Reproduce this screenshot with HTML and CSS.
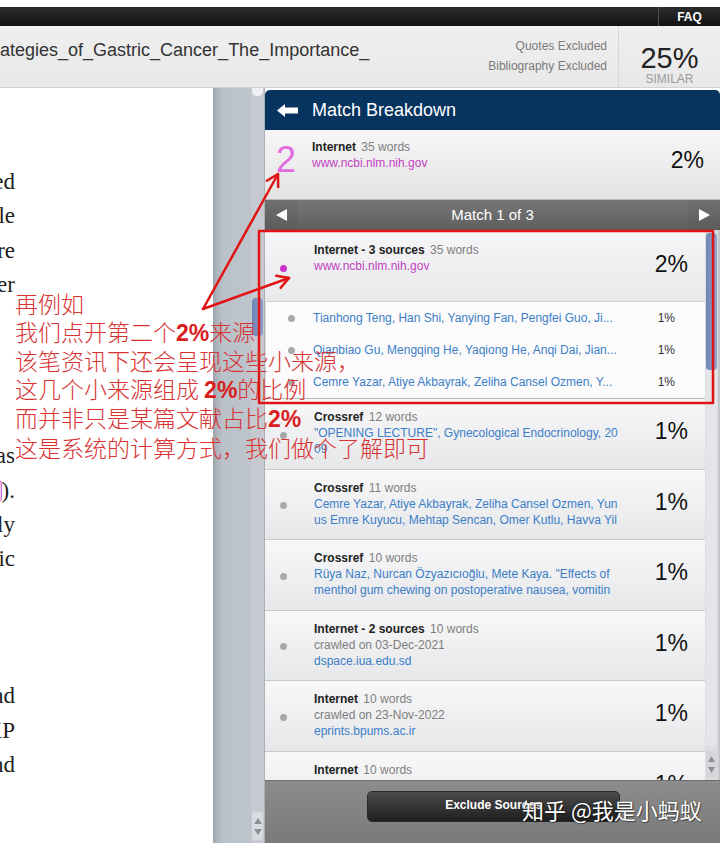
FILE: index.html
```html
<!DOCTYPE html>
<html>
<head>
<meta charset="utf-8">
<link rel="stylesheet" href="styles.css">
</head>
<body>
<div class="page">
  <div class="topstrip"></div>
  <div class="blackbar"><div class="faq">FAQ</div></div>
  <div class="titlebar">
    <div class="doc-title">ategies_of_Gastric_Cancer_The_Importance_</div>
    <div class="excl"><div>Quotes Excluded</div><div>Bibliography Excluded</div></div>
    <div class="score"><div class="score-num">25%</div><div class="score-lbl">SIMILAR</div></div>
  </div>
  <div class="main">
    <div class="doc">
      <div class="ln"><span>treated</span></div>
      <div class="ln"><span>while</span></div>
      <div class="ln"><span>were</span></div>
      <div class="ln"><span>other</span></div>
      <div class="ln"></div>
      <div class="ln"></div>
      <div class="ln"></div>
      <div class="ln"></div>
      <div class="ln"><span>was</span></div>
      <div class="ln"><span>al.<i class="cursor"></i>).</span></div>
      <div class="ln"><span>only</span></div>
      <div class="ln"><span>gastric</span></div>
      <div class="ln"></div>
      <div class="ln"></div>
      <div class="ln"></div>
      <div class="ln"><span>and</span></div>
      <div class="ln"><span>XXP</span></div>
      <div class="ln"><span>and</span></div>
    </div>
    <div class="gutter">
      <div class="gutter-fill"></div>
      <div class="vscroll">
        <div class="vs-cap"></div>
        <div class="vs-space"></div>
        <div class="vs-thumb"></div>
        <div class="vs-rest"></div>
        <div class="vs-arrows">
          <svg width="8" height="6" viewBox="0 0 8 6"><polygon points="4,0 8,6 0,6" fill="#8a8f96"/></svg>
          <svg width="8" height="6" viewBox="0 0 8 6"><polygon points="0,0 8,0 4,6" fill="#8a8f96"/></svg>
        </div>
      </div>
    </div>
    <div class="panel">
      <div class="ph">
        <svg class="back" width="21" height="13" viewBox="0 0 21 13"><polygon points="0,6.5 8,0 8,3.5 21,3.5 21,9.5 8,9.5 8,13" fill="#fff"/></svg>
        <span>Match Breakdown</span>
      </div>
      <div class="row-top">
        <div class="big-num">2</div>
        <div class="src-text">
          <div><b>Internet</b> <span class="words">35 words</span></div>
          <div class="mag">www.ncbi.nlm.nih.gov</div>
        </div>
        <div class="pct">2%</div>
      </div>
      <div class="matchbar">
        <div class="mb-btn"><svg width="11" height="12" viewBox="0 0 11 12"><polygon points="0,6 11,0 11,12" fill="#fff"/></svg></div>
        <div class="mb-title">Match 1 of 3</div>
        <div class="mb-btn"><svg width="11" height="12" viewBox="0 0 11 12"><polygon points="0,0 11,6 0,12" fill="#fff"/></svg></div>
      </div>
      <div class="scrollwrap">
        <div class="list">
          <div class="exp">
            <div class="dot dot-mag"></div>
            <div class="src-text">
              <div><b>Internet - 3 sources</b> <span class="words">35 words</span></div>
              <div class="mag">www.ncbi.nlm.nih.gov</div>
            </div>
            <div class="pct">2%</div>
          </div>
          <div class="sub">
            <div class="sub-row"><div class="dot sdot"></div><div class="blue">Tianhong Teng, Han Shi, Yanying Fan, Pengfei Guo, Ji...</div><div class="spct">1%</div></div>
            <div class="sub-row"><div class="dot sdot"></div><div class="blue">Qianbiao Gu, Mengqing He, Yaqiong He, Anqi Dai, Jian...</div><div class="spct">1%</div></div>
            <div class="sub-row"><div class="dot sdot"></div><div class="blue">Cemre Yazar, Atiye Akbayrak, Zeliha Cansel Ozmen, Y...</div><div class="spct">1%</div></div>
          </div>
          <div class="src">
            <div class="dot"></div>
            <div class="src-text">
              <div><b>Crossref</b> <span class="words">12 words</span></div>
              <div class="blue">"OPENING LECTURE", Gynecological Endocrinology, 20</div>
              <div class="blue">09</div>
            </div>
            <div class="pct">1%</div>
          </div>
          <div class="src">
            <div class="dot"></div>
            <div class="src-text">
              <div><b>Crossref</b> <span class="words">11 words</span></div>
              <div class="blue">Cemre Yazar, Atiye Akbayrak, Zeliha Cansel Ozmen, Yun</div>
              <div class="blue">us Emre Kuyucu, Mehtap Sencan, Omer Kutlu, Havva Yil</div>
            </div>
            <div class="pct">1%</div>
          </div>
          <div class="src">
            <div class="dot"></div>
            <div class="src-text">
              <div><b>Crossref</b> <span class="words">10 words</span></div>
              <div class="blue">Rüya Naz, Nurcan Özyazıcıoğlu, Mete Kaya. "Effects of</div>
              <div class="blue">menthol gum chewing on postoperative nausea, vomitin</div>
            </div>
            <div class="pct">1%</div>
          </div>
          <div class="src">
            <div class="dot"></div>
            <div class="src-text">
              <div><b>Internet - 2 sources</b> <span class="words">10 words</span></div>
              <div class="gray">crawled on 03-Dec-2021</div>
              <div class="blue">dspace.iua.edu.sd</div>
            </div>
            <div class="pct">1%</div>
          </div>
          <div class="src">
            <div class="dot"></div>
            <div class="src-text">
              <div><b>Internet</b> <span class="words">10 words</span></div>
              <div class="gray">crawled on 23-Nov-2022</div>
              <div class="blue">eprints.bpums.ac.ir</div>
            </div>
            <div class="pct">1%</div>
          </div>
          <div class="src">
            <div class="dot"></div>
            <div class="src-text">
              <div><b>Internet</b> <span class="words">10 words</span></div>
              <div class="gray">crawled on 10-Jan-2023</div>
              <div class="blue">www.ncbi.nlm.nih.gov</div>
            </div>
            <div class="pct">1%</div>
          </div>
        </div>
        <div class="psb">
          <div class="psb-thumb"></div>
          <div class="psb-track"></div>
          <div class="psb-arrows">
            <svg width="7" height="6" viewBox="0 0 7 6"><polygon points="3.5,0 7,6 0,6" fill="#8a8f96"/></svg>
            <svg width="7" height="6" viewBox="0 0 7 6"><polygon points="0,0 7,0 3.5,6" fill="#8a8f96"/></svg>
          </div>
        </div>
      </div>
      <div class="pbottom"><div class="btn">Exclude Sources</div></div>
    </div>
  </div>

  <svg class="annot" width="720" height="843" viewBox="0 0 720 843">
    <g stroke="#e01414" stroke-width="2.5" fill="none" stroke-linecap="round" stroke-linejoin="round">
      <rect x="259" y="231" width="454" height="172"/>
      <line x1="203" y1="309" x2="278" y2="174"/>
      <polyline points="266.8,180.7 278,174 278.2,187"/>
      <line x1="203" y1="309" x2="289" y2="278"/>
      <polyline points="276.2,275.7 289,278 280.6,287.9"/>
    </g>
  </svg>
  <div class="note">
    <div>再例如</div>
    <div>我们点开第二个<b>2%</b>来源</div>
    <div>该笔资讯下还会呈现这些小来源，</div>
    <div>这几个小来源组成 <b>2%</b>的比例</div>
    <div>而并非只是某篇文献占比<b>2%</b></div>
    <div>这是系统的计算方式，我们做个了解即可</div>
  </div>
  <div class="watermark">知乎 @我是小蚂蚁</div>
</div>
</body>
</html>
```

FILE: styles.css
```css
* { box-sizing: border-box; }
html, body { margin: 0; padding: 0; }
body {
  width: 720px;
  height: 843px;
  overflow: hidden;
  font-family: "Liberation Sans", Arial, sans-serif;
  background: #fff;
}
.page {
  position: relative;
  width: 720px;
  height: 843px;
  overflow: hidden;
  display: flex;
  flex-direction: column;
}
.topstrip { height: 7px; background: #fff; flex: none; }
.blackbar {
  height: 19px;
  flex: none;
  background: linear-gradient(#2c2c2c, #121212);
  display: flex;
  justify-content: flex-end;
}
.faq {
  width: 62px;
  border-left: 1px solid #4a4a4a;
  color: #fff;
  font-weight: bold;
  font-size: 12px;
  display: flex;
  align-items: center;
  justify-content: center;
}
.titlebar {
  height: 62px;
  flex: none;
  background: linear-gradient(#efefef, #e8e8e8);
  border-bottom: 1px solid #d2d2d2;
  display: flex;
}
.doc-title {
  flex: 1;
  font-size: 18px;
  line-height: 20px;
  color: #333;
  padding-top: 14px;
  white-space: nowrap;
  overflow: hidden;
}
.excl {
  text-align: right;
  font-size: 12px;
  line-height: 20px;
  color: #7a7a7a;
  padding-top: 10px;
  padding-right: 11px;
}
.score {
  width: 102px;
  border-left: 1px solid #d6d6d6;
  text-align: center;
  padding-top: 17px;
}
.score-num { font-size: 29px; line-height: 30px; color: #222; }
.score-lbl { font-size: 12px; line-height: 13px; color: #999; }

.main { flex: 1; display: flex; min-height: 0; }
.doc {
  width: 213px;
  flex: none;
  background: #fff;
  overflow: hidden;
  padding-top: 77px;
  font-family: "Liberation Serif", "Times New Roman", serif;
  font-size: 23px;
  line-height: 34.3px;
  color: #1e1e1e;
}
.ln {
  width: 15px;
  height: 34.3px;
  display: flex;
  justify-content: flex-end;
  white-space: nowrap;
}
.ln span { flex: none; }
.cursor {
  display: inline-block;
  width: 4px;
  height: 22px;
  vertical-align: -4px;
  border: 1px solid #d36fd6;
  border-left: none;
  border-radius: 0 4px 4px 0;
  background: #f2c6f0;
}
.gutter { width: 52px; flex: none; display: flex; }
.gutter-fill {
  width: 38px;
  background: linear-gradient(90deg, #9ca2aa 0, #aeb4bc 4px, #bbc1c9 10px, #bec4cc 100%);
}
.vscroll {
  width: 14px;
  display: flex;
  flex-direction: column;
  background: #c6cad0;
  border-right: 1px solid #aab0b7;
  padding: 0 1px;
}
.vs-cap { height: 8px; background: #eef0f3; border-radius: 0 0 5px 5px; }
.vs-space { height: 202px; }
.vs-thumb { height: 38px; background: linear-gradient(90deg, #6f86b4, #8aa0cb); border-radius: 4px; }
.vs-rest { flex: 1; }
.vs-arrows {
  height: 28px;
  margin-bottom: 3px;
  background: #d8dbe0;
  border-radius: 3px;
  display: flex;
  flex-direction: column;
  align-items: center;
  justify-content: space-around;
  padding: 3px 0;
}

.panel {
  width: 455px;
  flex: none;
  margin-top: 2px;
  display: flex;
  flex-direction: column;
  border-radius: 5px 5px 0 0;
  overflow: hidden;
  background: #d9d9d9;
}
.ph {
  height: 40px;
  flex: none;
  background: #06345f;
  display: flex;
  align-items: center;
  color: #fff;
  font-size: 18px;
}
.back { margin-left: 12px; margin-right: 14px; }
.row-top {
  height: 70px;
  flex: none;
  background: linear-gradient(#f7f7f7, #e3e3e3);
  border-bottom: 1px solid #b9b9b9;
  display: grid;
  grid-template-columns: 47px 1fr auto;
}
.big-num {
  font-size: 36px;
  line-height: 36px;
  color: #e36ae0;
  padding-left: 11px;
  padding-top: 12px;
}
.src-text {
  font-size: 12px;
  line-height: 16px;
  color: #222;
  white-space: nowrap;
  overflow: hidden;
}
.row-top .src-text { padding-top: 9px; }
.src-text b { font-weight: bold; color: #222; }
.words { color: #7e7e7e; margin-left: 2px; }
.mag { color: #c23fc4; }
.blue { color: #3b7ec8; }
.gray { color: #7e7e7e; }
.pct {
  font-size: 23px;
  line-height: 24px;
  color: #111;
  padding-right: 16px;
  padding-top: 18px;
}
.matchbar {
  height: 30px;
  flex: none;
  background: linear-gradient(#767676, #5f5f5f);
  display: flex;
  align-items: center;
  color: #fff;
  font-size: 15px;
}
.mb-btn {
  width: 32px;
  height: 30px;
  display: flex;
  align-items: center;
  justify-content: center;
  background: linear-gradient(#707070, #5b5b5b);
}
.mb-title { flex: 1; text-align: center; padding-bottom: 2px; }
.scrollwrap { height: 550px; flex: none; display: flex; }
.list {
  width: 440px;
  flex: none;
  overflow: hidden;
  background: #e8e9eb;
}
.exp {
  height: 72px;
  background: linear-gradient(#f6f6f8, #e8e9eb);
  border-bottom: 1px solid #cfcfcf;
  display: grid;
  grid-template-columns: 49px 1fr auto;
}
.exp .src-text { padding-top: 12px; }
.exp .pct { padding-right: 17px; padding-top: 22px; }
.dot {
  width: 7px;
  height: 7px;
  border-radius: 50%;
  background: #a9a9a9;
  margin-left: 15px;
  align-self: center;
  margin-top: 3px;
}
.dot-mag { background: #cc33cc; margin-top: 6px; }
.sub {
  background: #fbfbfb;
  border-bottom: 1px solid #b8b8b8;
  border-left: 1px solid #dcdcdc;
}
.sub-row {
  height: 32px;
  display: grid;
  grid-template-columns: 47px 1fr auto;
  align-items: center;
  font-size: 12px;
}
.sdot { margin-left: 22px; margin-top: 0; }
.sub-row .blue { white-space: nowrap; overflow: hidden; }
.spct { color: #333; padding-right: 30px; padding-left: 20px; }
.src {
  height: 70.5px;
  background: linear-gradient(#f8f8f9, #e6e7e9);
  border-bottom: 1px solid #c9c9c9;
  display: grid;
  grid-template-columns: 49px 1fr auto;
}
.src .src-text { padding-top: 10px; }
.src .pct { padding-right: 17px; padding-top: 20px; }
.psb {
  flex: 1;
  display: flex;
  flex-direction: column;
  background: #dcdde0;
  border-right: 2px solid #c4c6ca;
  padding: 3px 1px 2px 1px;
}
.psb-thumb {
  height: 137px;
  background: linear-gradient(90deg, #6f86b4, #8ea3cc);
  border-radius: 4px;
}
.psb-track { flex: 1; border-radius: 0 0 5px 5px; background: #e4e5e8; margin-bottom: 4px; }
.psb-arrows {
  height: 27px;
  background: #d4d6da;
  border-radius: 3px;
  display: flex;
  flex-direction: column;
  align-items: center;
  justify-content: space-around;
  padding: 3px 0;
}
.pbottom {
  flex: 1;
  background: linear-gradient(#8c8c8c, #7a7a7a);
  border-top: 1px solid #6c6c6c;
  padding-left: 102px;
  padding-top: 10px;
}
.btn {
  width: 253px;
  height: 31px;
  border-radius: 5px;
  background: linear-gradient(#4b4b4b, #1f1f1f);
  border: 1px solid #2a2a2a;
  color: #fff;
  font-weight: bold;
  font-size: 12px;
  display: flex;
  align-items: center;
  justify-content: center;
  padding-bottom: 3px;
}

.annot { position: absolute; left: 0; top: 0; pointer-events: none; }
.note {
  position: absolute;
  left: 15px;
  top: 290px;
  font-family: "Noto Sans CJK SC", "Liberation Sans", sans-serif;
  font-size: 23px;
  font-weight: 300;
  line-height: 27.5px;
  color: #d83232;
  white-space: nowrap;
}
.note b { font-family: "Liberation Sans", sans-serif; font-weight: bold; color: #d82020; }
.watermark {
  position: absolute;
  left: 522px;
  top: 794px;
  font-family: "Noto Sans CJK SC", sans-serif;
  font-size: 22px;
  line-height: 30px;
  color: #fff;
  text-shadow: 0 0 2px rgba(0,0,0,0.55), 1px 1px 1px rgba(0,0,0,0.4);
  white-space: nowrap;
}
```
